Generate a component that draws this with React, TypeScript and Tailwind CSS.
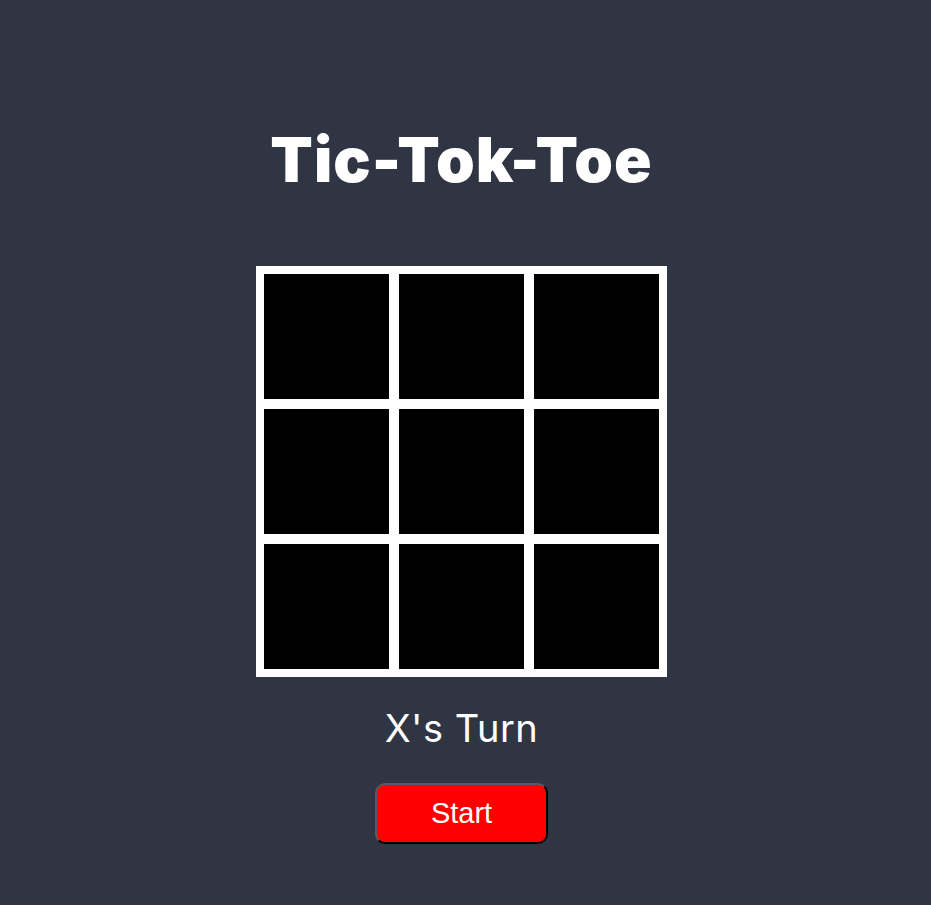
import React, { useState } from 'react'

const App = () => {
    const [board] = useState<string[]>(Array(9).fill(''))

    return (
        <div className="min-h-screen w-full bg-[#303544] flex flex-col items-center pt-[125px] pr-[8px]" style={{ minHeight: 905 }}>
            <h1 className="text-white text-[62px] leading-[70px] font-black font-['Inter','Noto_Sans',sans-serif] tracking-[1px]">
                Tic-Tok-Toe
            </h1>

            <div className="mt-[71px] grid grid-cols-3 border-[3px] border-white">
                {board.map((cell, index) => (
                    <div
                        key={index}
                        className="w-[135px] h-[135px] bg-black border-[5px] border-white flex items-center justify-center text-white text-6xl cursor-pointer"
                    >
                        {cell}
                    </div>
                ))}
            </div>

            <p className="mt-[27px] text-white text-[38px] leading-[48px] font-['Inter','Noto_Sans',sans-serif] tracking-[0.5px]">
                X's Turn
            </p>

            <button className="mt-[31px] w-[173px] h-[61px] bg-[#ff0000] text-white text-[29px] font-['Liberation_Sans',Arial,sans-serif] rounded-[10px] border-2 border-t-[#555a66] border-l-[#555a66] border-b-black border-r-black">
                Start
            </button>
        </div>
    )
}

export default App
